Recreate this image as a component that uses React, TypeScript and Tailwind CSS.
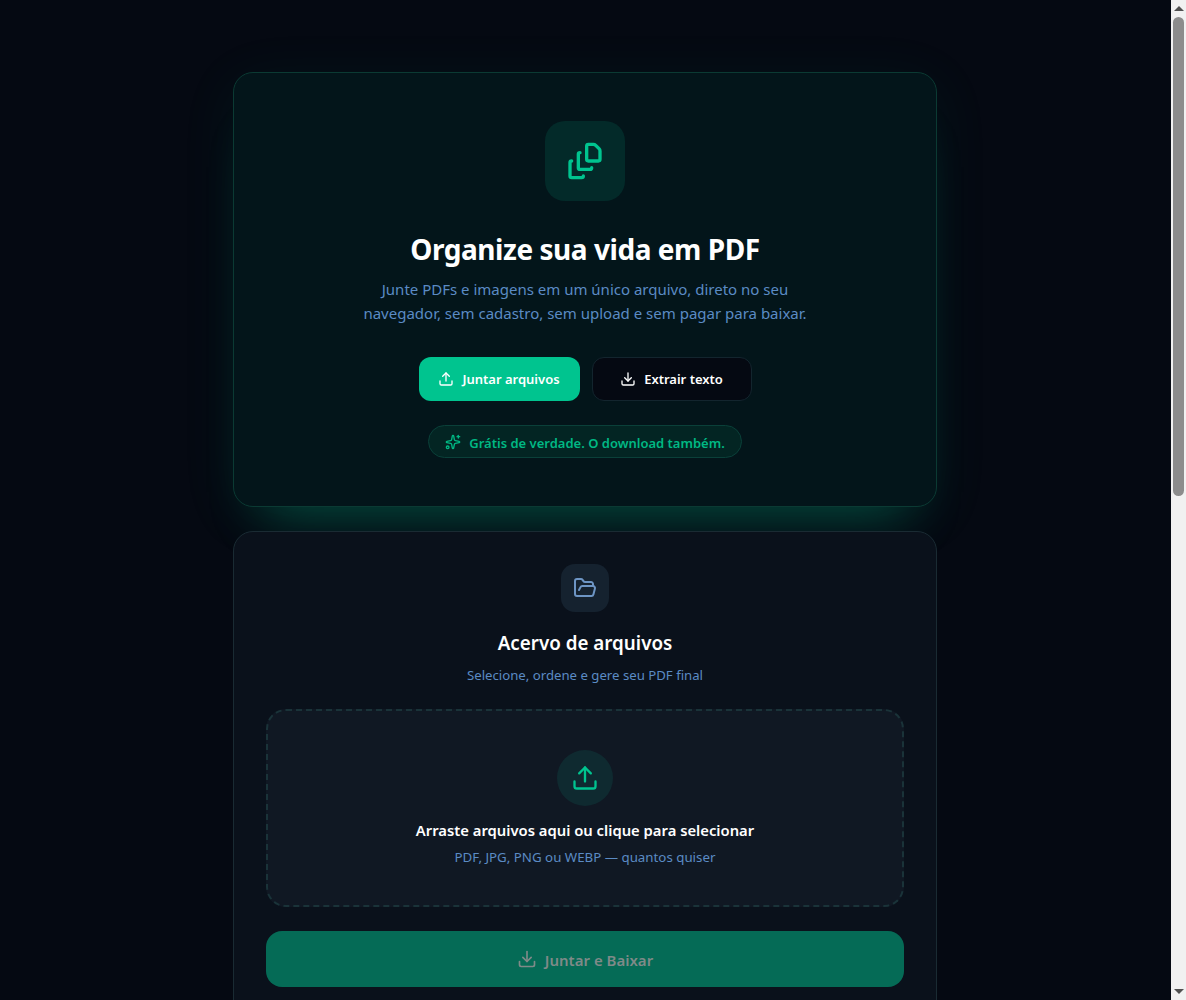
import { Download, FileStack, FolderOpen, Sparkles, Upload } from "lucide-react";

function FakeScrollbar() {
  return (
    <aside className="fixed right-0 top-0 flex h-screen w-[15px] flex-col items-center bg-[#f1f1f1]">
      <div className="mt-[6px] h-0 w-0 border-x-[5px] border-b-[5px] border-x-transparent border-b-[#505050]" />
      <div className="mt-[6px] h-[479px] w-[11px] rounded-full bg-[#8c8c8c]" />
      <div className="mt-auto mb-[6px] h-0 w-0 border-x-[5px] border-t-[5px] border-x-transparent border-t-[#505050]" />
    </aside>
  );
}

export default function App() {
  return (
    <div className="min-h-[2017px] bg-[#050912] pr-4 font-['Noto_Sans',sans-serif] text-white">
      <main className="mx-auto flex max-w-[768px] flex-col gap-6 px-8 pt-[72px]">
        <section className="flex flex-col items-center rounded-[20px] border border-[#0b3a33] bg-[#03151a] px-8 pb-12 pt-12 shadow-[0_40px_50px_-30px_rgba(0,196,143,0.3),0_10px_60px_0_rgba(0,196,143,0.07)]">
          <div className="flex h-20 w-20 items-center justify-center rounded-[20px] bg-[#032a29]">
            <FileStack className="h-10 w-10 text-[#00c48f]" strokeWidth={2} />
          </div>
          <h1 className="mt-[26px] text-[28px] leading-[44px] font-bold tracking-[-0.45px]">Organize sua vida em PDF</h1>
          <p className="mt-[6px] max-w-[480px] text-center text-[15px] leading-6 text-[#5b8bc4]">
            Junte PDFs e imagens em um único arquivo, direto no seu navegador, sem cadastro, sem upload e sem pagar para baixar.
          </p>
          <div className="mt-8 flex gap-3">
            <button className="flex h-11 w-[161px] items-center justify-center gap-2 rounded-xl bg-[#00c48f] text-[13px] font-semibold">
              <Upload className="h-4 w-4" />
              <span className="mt-[2px]">Juntar arquivos</span>
            </button>
            <button className="flex h-11 w-[160px] items-center justify-center gap-2 rounded-xl border border-[#13252e] bg-[#050912] text-[13px] font-semibold">
              <Download className="h-4 w-4" />
              <span className="mt-[2px]">Extrair texto</span>
            </button>
          </div>
          <div className="mt-6 flex h-[33px] items-center gap-2 rounded-full border border-[#0a4039] bg-[#032523] px-[16.5px] text-[13px] font-semibold text-[#00b884]">
            <Sparkles className="h-4 w-4" />
            <span className="mt-1">Grátis de verdade. O download também.</span>
          </div>
        </section>

        <section className="flex flex-col items-center rounded-[20px] border border-[#1a2b33] bg-[#0a111b] px-8 pb-8 pt-8">
          <div className="flex h-12 w-12 items-center justify-center rounded-[14px] bg-[#15222f]">
            <FolderOpen className="h-6 w-6 text-[#6d95c4]" />
          </div>
          <h2 className="mt-[17px] text-[18.8px] leading-7 font-semibold">Acervo de arquivos</h2>
          <p className="mt-2 text-[13.2px] leading-5 text-[#5b8bc4]">Selecione, ordene e gere seu PDF final</p>
          <div className="mt-6 flex h-[198px] w-full flex-col items-center rounded-[20px] border-2 border-dashed border-[#1a3339] bg-[#101823] pt-[39px]">
            <div className="flex h-14 w-14 items-center justify-center rounded-full bg-[#0f2a30]">
              <Upload className="h-7 w-7 text-[#00c48f]" />
            </div>
            <p className="mt-[14px] text-[14.8px] leading-5 font-semibold">Arraste arquivos aqui ou clique para selecionar</p>
            <p className="mt-[9px] text-[13.3px] leading-4 text-[#5b8bc4]">PDF, JPG, PNG ou WEBP — quantos quiser</p>
          </div>
          <button className="mt-6 flex h-14 w-full items-center justify-center gap-2 rounded-2xl bg-[#056b56] text-[15px] font-semibold text-[#7f8a88]">
            <Download className="h-5 w-5" />
            <span className="mt-[2px]">Juntar e Baixar</span>
          </button>
        </section>
      </main>
      <FakeScrollbar />
    </div>
  );
}
